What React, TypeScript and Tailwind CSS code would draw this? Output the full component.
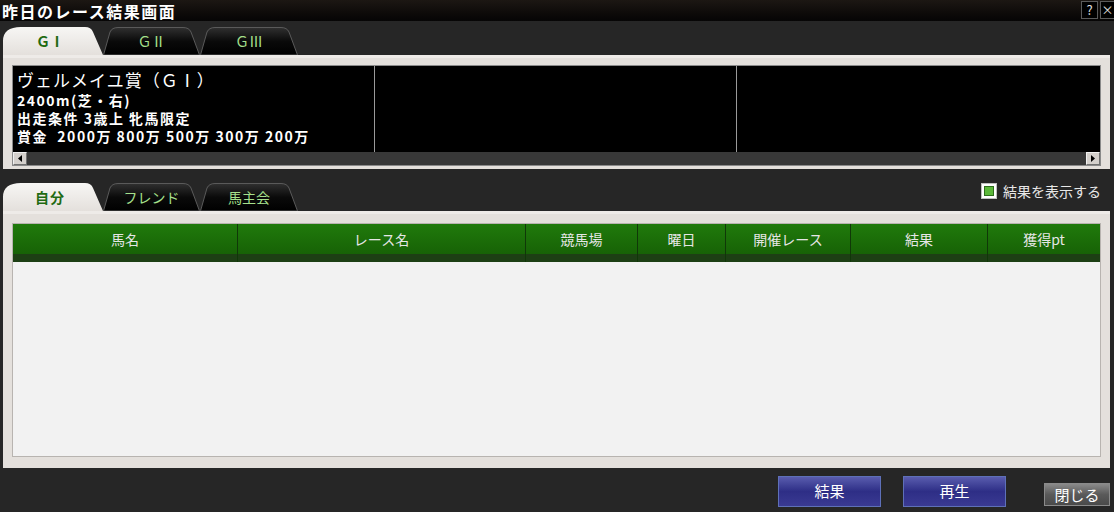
import React from 'react';

const font = "font-['Noto_Sans_CJK_JP','Noto_Sans',sans-serif]";

function Tab({ label, active, width, bold }: { label: string; active?: boolean; width: number; bold?: boolean }) {
  const w = width;
  const d = active
    ? `M0,28 V14 Q0,0 18,0 H${w - 18} Q${w - 12},0 ${w - 10},5 L${w},28 Z`
    : `M0.5,28 L7,5 Q9,0.5 15,0.5 H${w - 17} Q${w - 11},0.5 ${w - 9},5 L${w - 0.5},28 Z`;
  return (
    <div className="relative h-[28px] flex items-center justify-center" style={{ width: w }}>
      <svg className="absolute inset-0" width={w} height={28} viewBox={`0 0 ${w} 28`}>
        <defs>
          <linearGradient id="tabOn" x1="0" y1="0" x2="0" y2="1">
            <stop offset="0" stopColor="#f7f6f4" />
            <stop offset="1" stopColor="#e4e0dc" />
          </linearGradient>
          <linearGradient id="tabOff" x1="0" y1="0" x2="0" y2="1">
            <stop offset="0" stopColor="#303030" />
            <stop offset="0.5" stopColor="#0a0a0a" />
            <stop offset="1" stopColor="#000000" />
          </linearGradient>
        </defs>
        <path d={d} fill={active ? 'url(#tabOn)' : 'url(#tabOff)'} stroke={active ? 'none' : '#5a5a5a'} strokeWidth={1} />
      </svg>
      <span
        className={`relative text-[14px] leading-[20px] ${active ? 'text-[#1f6a12] font-bold pr-[6px]' : 'text-[#a6e08c]'} ${
          bold ? 'font-bold tracking-[1px]' : ''
        }`}
      >
        {label}
      </span>
    </div>
  );
}

function ScrollArrow({ dir }: { dir: 'left' | 'right' }) {
  return (
    <div className="w-[14px] h-[13px] bg-[#d4d0cc] border border-[#f0f0f0] border-r-[#707070] border-b-[#707070] flex items-center justify-center">
      <svg width="6" height="7" viewBox="0 0 6 7">
        {dir === 'left' ? <path d="M5,0 V7 L1,3.5 Z" fill="#000" /> : <path d="M1,0 V7 L5,3.5 Z" fill="#000" />}
      </svg>
    </div>
  );
}

const columns = ['馬名', 'レース名', '競馬場', '曜日', '開催レース', '結果', '獲得pt'];

export default function App() {
  return (
    <div className={`w-[1114px] h-[512px] bg-[#262626] flex flex-col overflow-hidden ${font}`}>
      {/* title bar */}
      <div className="h-[21px] bg-gradient-to-b from-[#1c1713] to-[#060505] flex items-center justify-between pl-[2px]">
        <span className="text-white text-[16px] font-bold leading-[21px] tracking-[1.5px] pt-[1px]">昨日のレース結果画面</span>
        <div className="flex gap-[2px] self-start pt-[1px]">
          <div className="w-[17px] h-[18px] border border-[#5a5a5a] bg-black text-[#e0e0e0] text-[13px] leading-[16px] text-center">?</div>
          <div className="w-[14px] h-[18px] border border-[#5a5a5a] border-r-0 bg-black text-[#e0e0e0] text-[12px] leading-[16px] text-center">×</div>
        </div>
      </div>

      {/* grade tabs */}
      <div className="flex pl-[3px] mt-[6px]">
        <Tab label="ＧⅠ" active width={100} />
        <Tab label="ＧⅡ" width={97} />
        <Tab label="ＧⅢ" width={98} />
      </div>

      {/* race info */}
      <div className="ml-[3px] mr-[4px] h-[114px] bg-[#e4e0dc] border-t-[3px] border-[#eeebe8] pt-[7px] px-[9px] pb-[5px]">
        <div className="border border-[#8a8a8a] bg-black flex flex-col">
          <div className="h-[86px] grid grid-cols-[362px_362px_1fr]">
            <div className="border-r border-[#9a9a9a] text-white pl-[4px] pt-[3px]">
              <div className="text-[17px] leading-[22px] tracking-[1px]">ヴェルメイユ賞（ＧⅠ）</div>
              <div className="text-[14px] font-bold leading-[18px] tracking-[1.5px]">2400m(芝・右)</div>
              <div className="text-[14px] font-bold leading-[18px] tracking-[1.5px]">出走条件 3歳上 牝馬限定</div>
              <div className="text-[14px] font-bold leading-[18px] tracking-[1.5px] whitespace-pre">賞金  2000万 800万 500万 300万 200万</div>
            </div>
            <div className="border-r border-[#9a9a9a]" />
            <div />
          </div>
          <div className="h-[13px] bg-[#383838] flex justify-between">
            <ScrollArrow dir="left" />
            <ScrollArrow dir="right" />
          </div>
        </div>
      </div>

      {/* owner tabs + checkbox */}
      <div className="flex items-start justify-between pl-[3px] pr-[13px] mt-[14px]">
        <div className="flex">
          <Tab label="自分" active width={100} bold />
          <Tab label="フレンド" width={97} />
          <Tab label="馬主会" width={98} />
        </div>
        <div className="flex items-center gap-[6px] h-[16px]">
          <div className="w-[16px] h-[16px] bg-white border border-[#c0c0c0] flex items-center justify-center">
            <div className="w-[10px] h-[10px] bg-[#5cb83a] border border-[#2e6e1c]" />
          </div>
          <span className="text-[#e8e8e8] text-[14px] leading-[16px]">結果を表示する</span>
        </div>
      </div>

      {/* results table */}
      <div className="ml-[3px] mr-[4px] h-[257px] bg-[#e4e0dc] border-t-[3px] border-[#eeebe8] pt-[9px] px-[9px] pb-[11px]">
        <div className="h-full border border-[#b8b4b0] bg-[#f2f2f2] flex flex-col">
          <div className="grid grid-cols-[225px_288px_112px_88px_125px_137px_1fr] h-[38px]">
            {columns.map((c, i) => (
              <div
                key={c}
                className={`flex flex-col ${i < columns.length - 1 ? 'border-r border-[#103808]' : ''}`}
              >
                <div className="h-[30px] bg-gradient-to-b from-[#207a0c] to-[#176206] flex items-center justify-center text-[#e6e6e6] text-[14px]">
                  {c}
                </div>
                <div className="h-[8px] bg-[#1d3f14]" />
              </div>
            ))}
          </div>
        </div>
      </div>

      {/* bottom buttons */}
      <div className="flex items-start pt-[8px] pl-[778px]">
        <button className="w-[103px] h-[31px] border border-[#5e70b8] bg-gradient-to-b from-[#5a5cae] via-[#2e2e86] to-[#3a3a92] text-white text-[15px]">
          結果
        </button>
        <button className="ml-[22px] w-[103px] h-[31px] border border-[#5e70b8] bg-gradient-to-b from-[#5a5cae] via-[#2e2e86] to-[#3a3a92] text-white text-[15px]">
          再生
        </button>
        <button className="ml-[38px] mt-[7px] w-[66px] h-[23px] border border-[#8a8a8a] bg-gradient-to-b from-[#8a8a8a] via-[#5a5a5a] to-[#4a4a4a] text-white text-[15px] leading-none">
          閉じる
        </button>
      </div>
    </div>
  );
}
